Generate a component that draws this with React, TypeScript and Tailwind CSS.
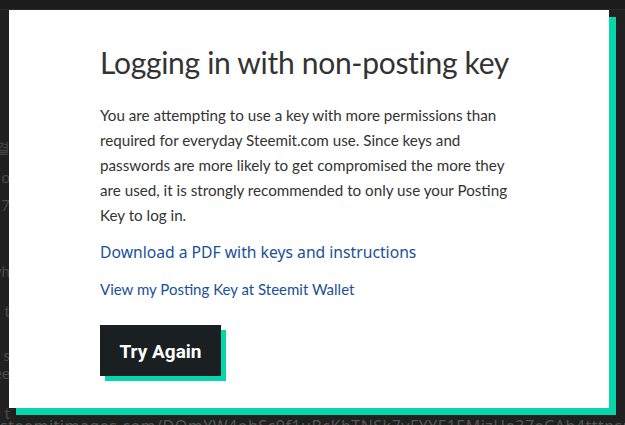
import React from "react";

const bgLines = [
  { top: "mt-[128px]", text: "결" },
  { top: "mt-[12px]", text: "o" },
  { top: "mt-[10px]", text: "7" },
  { top: "mt-[48px]", text: "vh" },
  { top: "mt-[22px]", text: "t" },
  { top: "mt-[26px]", text: "s" },
  { top: "mt-[0px]", text: "ee" },
  { top: "mt-[22px]", text: "t" },
];

export default function App() {
  return (
    <div className="relative w-[625px] h-[425px] overflow-hidden bg-[#202020] font-['Lato',sans-serif]">
      {/* page behind the overlay */}
      <div className="h-[10px] bg-[#1c1c1c] border-b border-[#2a2a2a]" />
      <div className="flex flex-col w-[10px] overflow-hidden text-[15px] leading-[18px] text-[#4a4a4a]">
        {bgLines.map((l, i) => (
          <div key={i} className={`${l.top} whitespace-nowrap flex justify-end`}>
            {l.text}
          </div>
        ))}
      </div>
      <div className="absolute left-0 top-[418px] whitespace-nowrap text-[16px] leading-[16px] text-[#555] font-['Noto_Sans',sans-serif] tracking-[0.5px]">
        steemitimages.com/DQmYW4ohSc9f1uBcKbTNSk7vFYYF1EMjzHe37eCAb4tttps://image.png)![
      </div>

      {/* modal */}
      <div className="absolute left-[9px] top-[10px] w-[600px] h-[398px] bg-white shadow-[7px_7px_0_0_#06d6a9] pl-[91px] pr-[60px] pt-[32px]">
        <h1 className="text-[30px] leading-[40px] text-[#333] font-normal tracking-[-0.3px]">
          Logging in with non-posting key
        </h1>
        <p className="mt-[21px] text-[15.2px] leading-[25px] text-[#333] w-[418px]">
          You are attempting to use a key with more permissions than required for everyday Steemit.com use. Since keys and passwords are more likely to get compromised the more they are used, it is strongly recommended to only use your Posting Key to log in.
        </p>
        <a className="block mt-[13px] text-[15.7px] leading-[22px] text-[#1a5099] font-['Noto_Sans',sans-serif]">
          Download a PDF with keys and instructions
        </a>
        <a className="block mt-[15px] text-[15px] leading-[22px] text-[#1a5099]">
          View my Posting Key at Steemit Wallet
        </a>
        <button className="mt-[25px] w-[121px] h-[51px] pt-[3px] bg-[#1a1f22] text-white text-[19px] font-bold font-['Roboto',sans-serif] shadow-[5px_5px_0_0_#06d6a9]">
          Try Again
        </button>
      </div>
    </div>
  );
}
